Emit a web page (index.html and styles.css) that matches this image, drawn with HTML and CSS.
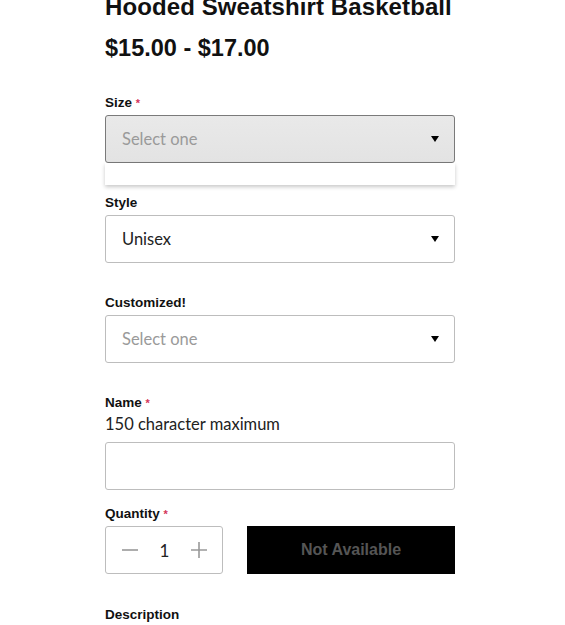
FILE: index.html
```html
<!DOCTYPE html>
<html>
<head>
<meta charset="utf-8">
<link rel="stylesheet" href="styles.css">
</head>
<body>
<div class="page">
  <h1 class="title">Hooded Sweatshirt Basketball</h1>
  <div class="price">$15.00 - $17.00</div>

  <div class="field field-size">
    <div class="label">Size <span class="req">*</span></div>
    <div class="select select-open">
      <span class="placeholder">Select one</span>
      <span class="arrow"></span>
    </div>
    <div class="dropdown"></div>
  </div>

  <div class="field field-style">
    <div class="label">Style</div>
    <div class="select">
      <span class="value">Unisex</span>
      <span class="arrow"></span>
    </div>
  </div>

  <div class="field field-custom">
    <div class="label">Customized!</div>
    <div class="select">
      <span class="placeholder">Select one</span>
      <span class="arrow"></span>
    </div>
  </div>

  <div class="field field-name">
    <div class="label">Name <span class="req">*</span></div>
    <div class="hint">150 character maximum</div>
    <div class="input"></div>
  </div>

  <div class="field field-qty">
    <div class="label">Quantity <span class="req">*</span></div>
    <div class="qty-row">
      <div class="stepper">
        <svg class="step" width="16" height="16" viewBox="0 0 16 16"><path d="M0 8H16" stroke="#999" stroke-width="1.6" fill="none"/></svg>
        <span class="qty">1</span>
        <svg class="step" width="16" height="16" viewBox="0 0 16 16"><path d="M0 8H16M8 0V16" stroke="#999" stroke-width="1.6" fill="none"/></svg>
      </div>
      <div class="btn">Not Available</div>
    </div>
  </div>

  <div class="desc">Description</div>
</div>
</body>
</html>
```
FILE: styles.css
```css
html, body {
  margin: 0;
  padding: 0;
  background: #fff;
}
body {
  font-family: "Lato", "Liberation Sans", sans-serif;
  color: #111;
}
.page {
  width: 350px;
  margin-left: 105px;
  margin-top: -8px;
}
.title {
  font-family: "Liberation Sans", sans-serif;
  font-size: 24px;
  font-weight: bold;
  line-height: 30px;
  margin: 0;
  letter-spacing: 0.1px;
  white-space: nowrap;
}
.price {
  font-family: "Liberation Sans", sans-serif;
  font-size: 23.5px;
  font-weight: bold;
  line-height: 30px;
  margin-top: 11px;
}
.field {
  position: relative;
}
.field-size { margin-top: 32px; }
.field-style { margin-top: 32px; }
.field-custom { margin-top: 32px; }
.field-name { margin-top: 32px; }
.field-qty { margin-top: 16px; }
.label {
  font-family: "Liberation Sans", sans-serif;
  font-size: 13.5px;
  font-weight: bold;
  line-height: 16px;
  margin-bottom: 4px;
}
.req {
  color: #d4335a;
  font-size: 11px;
  vertical-align: top;
}
.select {
  box-sizing: border-box;
  height: 48px;
  border: 1px solid #bdbdbd;
  border-radius: 3px;
  display: flex;
  align-items: center;
  justify-content: space-between;
  padding: 0 15px 0 16px;
  font-size: 16.5px;
}
.select-open {
  background: linear-gradient(#e9e9e9, #e3e3e3);
  border-color: #7a7a7a;
}
.placeholder { color: #9a9a9a; }
.value { color: #222; }
.arrow {
  width: 0;
  height: 0;
  border-left: 4px solid transparent;
  border-right: 4px solid transparent;
  border-top: 6px solid #000;
}
.dropdown {
  position: absolute;
  left: 0;
  right: 0;
  top: 68px;
  height: 22px;
  background: #fff;
  box-shadow: 0 2px 4px rgba(0,0,0,0.22);
}
.hint {
  font-size: 16.5px;
  line-height: 20px;
  color: #222;
  margin-top: -1px;
  margin-bottom: 8px;
}
.input {
  box-sizing: border-box;
  height: 48px;
  border: 1px solid #bdbdbd;
  border-radius: 3px;
}
.qty-row {
  display: flex;
  justify-content: space-between;
  gap: 24px;
}
.stepper {
  box-sizing: border-box;
  width: 118px;
  height: 48px;
  border: 1px solid #bdbdbd;
  border-radius: 3px;
  display: flex;
  align-items: center;
  justify-content: space-between;
  padding: 0 15px 0 16px;
}
.qty {
  font-size: 17px;
  color: #222;
}
.btn {
  flex: 1;
  height: 48px;
  background: #000;
  color: #555;
  font-family: "Liberation Sans", sans-serif;
  font-weight: bold;
  font-size: 16px;
  display: flex;
  align-items: center;
  justify-content: center;
}
.desc {
  font-family: "Liberation Sans", sans-serif;
  font-size: 13.5px;
  font-weight: bold;
  line-height: 16px;
  margin-top: 33px;
}
```
